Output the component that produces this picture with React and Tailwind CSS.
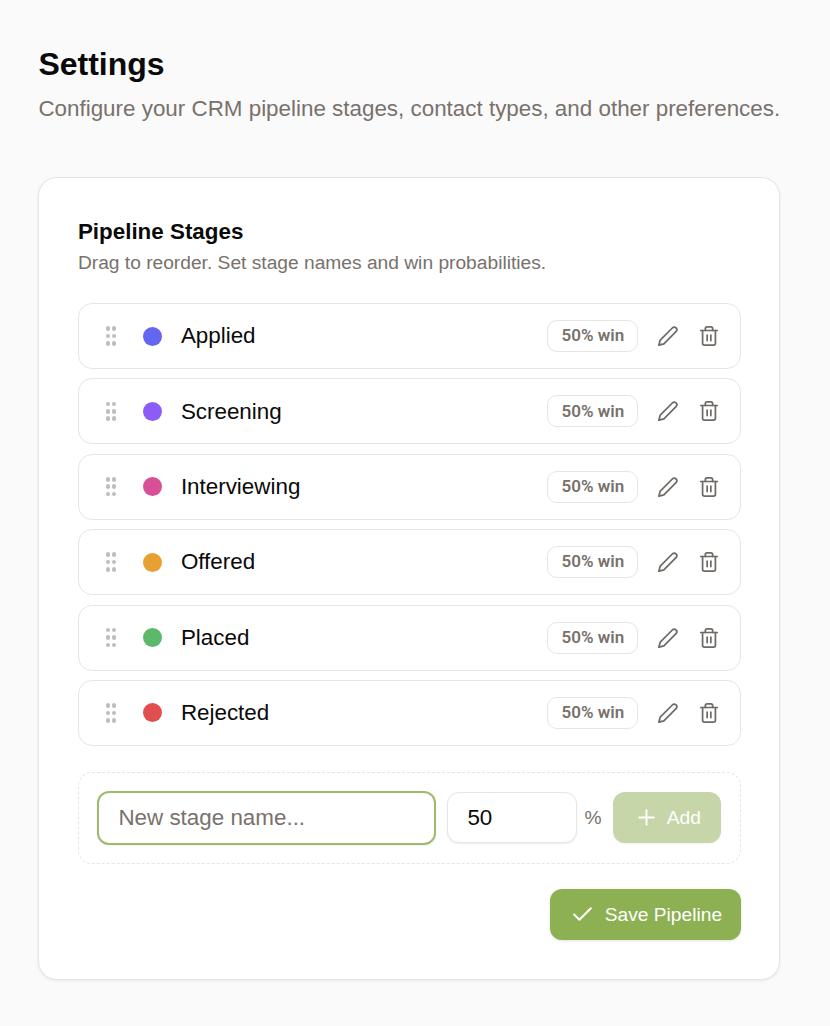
import React from "react";
import { Trash2, Plus, Check } from "lucide-react";

const stages = [
  ["Applied", "bg-[#6366f1]"],
  ["Screening", "bg-[#8b5cf6]"],
  ["Interviewing", "bg-[#d94f96]"],
  ["Offered", "bg-[#e8a033]"],
  ["Placed", "bg-[#5cb96a]"],
  ["Rejected", "bg-[#e04f4f]"],
];

function Grip() {
  return (
    <div className="grid grid-cols-[4.6px_4.6px] gap-x-[1.6px] gap-y-[2.8px] w-[10.8px] shrink-0">
      {[0, 1, 2, 3, 4, 5].map((i) => (
        <span key={i} className="w-[4.6px] h-[4.6px] rounded-full bg-[#bfbdbb]" />
      ))}
    </div>
  );
}

function PencilIcon() {
  return (
    <svg
      viewBox="0 0 24 24"
      fill="none"
      stroke="currentColor"
      strokeWidth="1.9"
      strokeLinecap="round"
      strokeLinejoin="round"
      className="ml-[19px] w-[22px] h-[22px] shrink-0 text-[#6f6a65]"
    >
      <path d="M17 3a2.85 2.85 0 0 1 4 4L7.5 20.5 2 22l1.5-5.5L17 3z" />
    </svg>
  );
}

export default function App() {
  return (
    <div className="min-h-[1026px] bg-[#fafafa] px-[38.4px] pt-[44px] font-['Liberation_Sans',Arial,sans-serif] text-[#0a0a0a]">
      <h1 className="text-[32px] leading-[40px] font-bold">Settings</h1>
      <p className="mt-[9px] text-[22.4px] leading-[32px] text-[#78716c] whitespace-nowrap">
        Configure your CRM pipeline stages, contact types, and other preferences.
      </p>

      <div className="mt-[52px] w-[742px] h-[803px] rounded-[19px] border border-[#e7e5e4] bg-white pt-[39px] pl-[39px] pr-[38px] shadow-[0_1px_3px_rgba(0,0,0,0.08)]">
        <h2 className="-ml-[0.5px] text-[22.4px] leading-[30px] font-bold">Pipeline Stages</h2>
        <p className="-ml-[0.5px] mt-[3px] text-[19.2px] leading-[26px] text-[#78716c] whitespace-nowrap">
          Drag to reorder. Set stage names and win probabilities.
        </p>

        <div className="mt-[27px] flex flex-col gap-[9.4px]">
          {stages.map(([name, color]) => (
            <div
              key={name}
              className="h-[66px] flex items-center rounded-[14px] border border-[#e7e5e4] bg-white pl-[26.2px] pr-[20px]"
            >
              <Grip />
              <span className={`ml-[27px] w-[19px] h-[19px] rounded-full shrink-0 ${color}`} />
              <span className="ml-[18.5px] text-[22.4px] flex-1">{name}</span>
              <span className="h-[32px] w-[91px] flex items-center justify-center rounded-[10px] border border-[#e7e5e4] font-['Roboto',sans-serif] text-[17px] font-semibold text-[#78716c]">
                50% win
              </span>
              <PencilIcon />
              <Trash2 className="ml-[19px] w-[22px] h-[22px] shrink-0 text-[#6f6a65]" strokeWidth={1.9} />
            </div>
          ))}
        </div>

        <div className="mt-[26px] h-[92px] flex items-center rounded-[14px] border border-dashed border-[#e7e5e4] pl-[18px] pr-[19px]">
          <input
            readOnly
            placeholder="New stage name..."
            className="w-[339px] h-[54px] rounded-[12px] border-2 border-[#9dbb6c] bg-white px-[19px] text-[22.4px] outline-none placeholder:text-[#78716c] shadow-[0_1px_2px_rgba(0,0,0,0.05)]"
          />
          <input
            readOnly
            value="50"
            className="ml-[11px] w-[130px] h-[51px] rounded-[12px] border border-[#e7e5e4] bg-white px-[19px] text-[22.4px] outline-none shadow-[0_1px_2px_rgba(0,0,0,0.08)]"
          />
          <span className="ml-[7px] pt-[1px] text-[19.2px] text-[#78716c]">%</span>
          <button className="ml-auto w-[108px] h-[51px] flex items-center justify-center gap-[8px] rounded-[12px] bg-[#c6d6a8] text-white text-[19.2px] shadow-[0_1px_2px_rgba(0,0,0,0.05)]">
            <Plus className="w-[25px] h-[25px]" strokeWidth={1.8} />
            <span className="pt-[1px]">Add</span>
          </button>
        </div>

        <div className="mt-[25px] flex justify-end">
          <button className="w-[191px] h-[51px] flex items-center justify-center gap-[10px] rounded-[12px] bg-[#8db052] text-white text-[19.2px] shadow-[0_1px_3px_rgba(0,0,0,0.12)]">
            <Check className="w-[25px] h-[25px]" strokeWidth={1.9} />
            <span className="pt-[1px]">Save Pipeline</span>
          </button>
        </div>
      </div>
    </div>
  );
}
